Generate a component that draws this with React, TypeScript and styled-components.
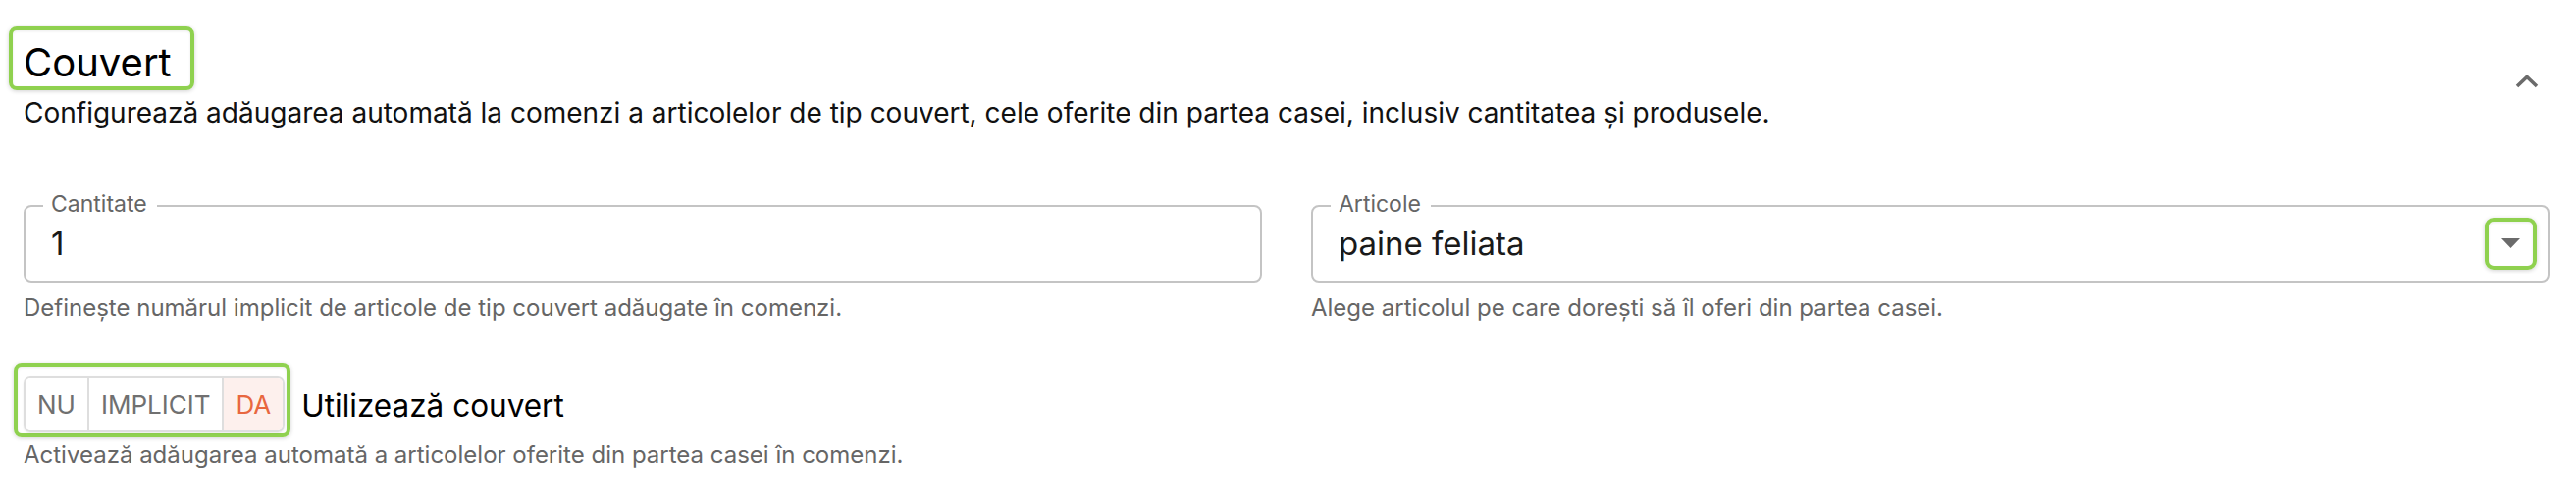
import React, { FunctionComponent, useState } from 'react';
import styled, { createGlobalStyle, css } from 'styled-components';

const GlobalStyle = createGlobalStyle`
  body {
    margin: 0;
    background: #fff;
    font-family: Inter, 'Noto Sans', sans-serif;
    color: #111;
  }
`;

const Section = styled.section`
  width: 2625px;
  box-sizing: border-box;
  padding: 27px 27px 0 24px;
`;

const Header = styled.div`
  display: flex;
  justify-content: space-between;
  align-items: flex-start;
`;

const Highlight = styled.div`
  display: inline-flex;
  align-items: center;
  border: 4px solid #8fd14f;
  border-radius: 8px;
  box-shadow: 0 1px 4px rgba(0, 0, 0, 0.18), inset 0 1px 3px rgba(0, 0, 0, 0.08);
`;

const TitleBox = styled(Highlight)`
  margin-left: -15px;
  padding: 8px 19px 0 11px;
`;

const Title = styled.h2`
  margin: 0;
  font-size: 40px;
  font-weight: 400;
  line-height: 49px;
  color: #000;
`;

const Description = styled.p`
  margin: 6px 0 0;
  font-size: 28px;
  line-height: 34px;
  color: #111;
`;

const Collapse = styled.button`
  border: none;
  background: transparent;
  padding: 0;
  margin: 49px 11px 0 0;
  width: 24px;
  height: 14px;
  cursor: pointer;
  display: flex;
`;

const Fields = styled.div`
  display: grid;
  grid-template-columns: 1fr 1fr;
  gap: 50px;
  margin-top: 64px;
`;

const Field = styled.fieldset`
  margin: 0;
  padding: 0 18px 15px;
  border: 2px solid #c4c4c4;
  border-radius: 8px;
  min-width: 0;
`;

const Legend = styled.legend`
  padding: 0 10px 0 8px;
  font-size: 23px;
  line-height: 28px;
  color: #666;
  transform: translateY(-2px);
`;

const Row = styled.div`
  display: flex;
  align-items: center;
  height: 48px;
`;

const Value = styled.div`
  flex: 1;
  padding-left: 8px;
  font-size: 33px;
  line-height: 40px;
  color: #1a1a1a;
`;

const Helper = styled.div<{ $gap?: number }>`
  margin-top: ${p => p.$gap ?? 10}px;
  font-size: 24px;
  line-height: 30px;
  color: #666;
`;

const DropBox = styled(Highlight)`
  width: 53px;
  height: 53px;
  box-sizing: border-box;
  justify-content: center;
  margin-right: -7px;
  border-radius: 9px;
`;

const ToggleRow = styled.div`
  display: flex;
  align-items: center;
  margin-top: 41px;
`;

const ToggleBox = styled(Highlight)`
  margin-left: -10px;
  padding: 10px 2px 1px 6px;
`;

const Group = styled.div`
  display: flex;
  height: 57px;
  box-sizing: border-box;
  border: 2px solid #dedede;
  border-radius: 7px;
  overflow: hidden;
  box-shadow: 0 1px 2px rgba(0, 0, 0, 0.08);
`;

const Segment = styled.button<{ $active?: boolean }>`
  border: none;
  background: #fff;
  font-family: inherit;
  font-size: 26px;
  color: #707070;
  padding: 0 12px;
  cursor: pointer;
  & + & {
    border-left: 2px solid #dedede;
  }
  ${p =>
    p.$active &&
    css`
      background: #fdf0ed;
      color: #e8673f;
    `}
`;

const ToggleLabel = styled.span`
  margin: 11px 0 0 11px;
  font-size: 31.5px;
  color: #000;
`;

const ChevronUp = () => (
  <svg width="24" height="14" viewBox="0 0 24 14">
    <path d="M2 12 L12 2.5 L22 12" fill="none" stroke="#6b6b6b" strokeWidth="3.6" />
  </svg>
);

const Caret = () => (
  <svg width="19" height="10" viewBox="0 0 19 10">
    <path d="M0 0 H19 L9.5 10 Z" fill="#6b6b6b" />
  </svg>
);

const options = ['NU', 'IMPLICIT', 'DA'];

const App: FunctionComponent = () => {
  const [mode, setMode] = useState('DA');

  return (
    <Section>
      <GlobalStyle />
      <Header>
        <div>
          <TitleBox>
            <Title>Couvert</Title>
          </TitleBox>
          <Description>
            Configurează adăugarea automată la comenzi a articolelor de tip couvert, cele oferite din
            partea casei, inclusiv cantitatea și produsele.
          </Description>
        </div>
        <Collapse aria-label="Restrânge">
          <ChevronUp />
        </Collapse>
      </Header>

      <Fields>
        <div>
          <Field>
            <Legend>Cantitate</Legend>
            <Row>
              <Value>1</Value>
            </Row>
          </Field>
          <Helper>Definește numărul implicit de articole de tip couvert adăugate în comenzi.</Helper>
        </div>
        <div>
          <Field>
            <Legend>Articole</Legend>
            <Row>
              <Value>paine feliata</Value>
              <DropBox>
                <Caret />
              </DropBox>
            </Row>
          </Field>
          <Helper>Alege articolul pe care dorești să îl oferi din partea casei.</Helper>
        </div>
      </Fields>

      <ToggleRow>
        <ToggleBox>
          <Group>
            {options.map(o => (
              <Segment key={o} $active={mode === o} onClick={() => setMode(o)}>
                {o}
              </Segment>
            ))}
          </Group>
        </ToggleBox>
        <ToggleLabel>Utilizează couvert</ToggleLabel>
      </ToggleRow>
      <Helper $gap={3}>Activează adăugarea automată a articolelor oferite din partea casei în comenzi.</Helper>
    </Section>
  );
};

export default App;
